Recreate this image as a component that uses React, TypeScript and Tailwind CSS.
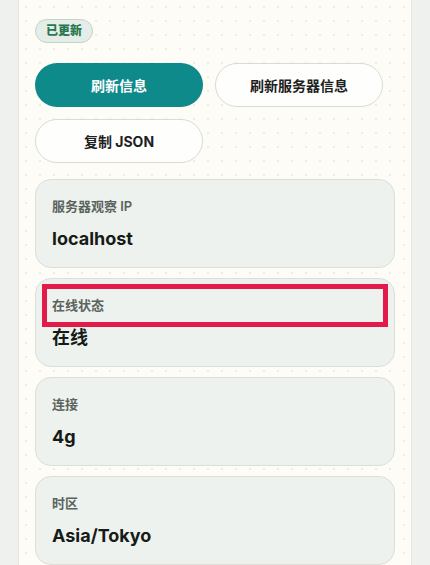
const FONT = 'font-["Inter","Noto_Sans_CJK_SC",sans-serif]';

const items = [
  { label: '服务器观察 IP', value: 'localhost' },
  { label: '在线状态', value: '在线', highlight: true },
  { label: '连接', value: '4g' },
  { label: '时区', value: 'Asia/Tokyo' },
];

function InfoCard({ label, value, highlight }: { label: string; value: string; highlight?: boolean }) {
  return (
    <div className="relative h-[89px] rounded-2xl border border-[#dcdfd7] bg-[#eef2ef] px-4 pt-4">
      <div className="text-[13px] font-semibold leading-5 text-[#5a635d]">{label}</div>
      <div className="mt-[10px] text-[18px] font-bold leading-[26px] text-[#161b18]">{value}</div>
      {/* annotation box */}
      {highlight && (
        <div className="pointer-events-none absolute left-[6px] right-[6px] top-[5px] h-[43px] border-[5px] border-[#e31b4b]" />
      )}
    </div>
  );
}

export default function App() {
  return (
    <div
      className={`${FONT} min-h-screen bg-[#eef1ee] bg-[radial-gradient(#e2e6e2_0.7px,transparent_0.7px)] bg-[size:4px_4px]`}
    >
      <div className="ml-[18px] min-h-screen w-[394px] border-x border-[#e4e6df] bg-[#fdfcf7] bg-[radial-gradient(#eeede4_1px,transparent_1px)] bg-[size:14px_14px] px-4 pt-[17px] pb-6">
        <span className="inline-flex h-6 items-center rounded-full border border-[#c3d5ca] bg-[#e4ede7] px-[10px] text-[12px] font-extrabold text-[#2a7750]">
          已更新
        </span>

        <div className="mt-[20px] flex w-[348px] flex-wrap gap-3">
          <button className="h-[44px] w-[168px] rounded-full bg-[#0f8a8a] text-[14px] font-bold text-white">
            刷新信息
          </button>
          <button className="h-[44px] w-[168px] rounded-full border border-[#d9dbd4] bg-[#fefefc] text-[14px] font-bold text-[#1d211f]">
            刷新服务器信息
          </button>
          <button className="h-[44px] w-[168px] rounded-full border border-[#d9dbd4] bg-[#fefefc] text-[14px] font-bold text-[#1d211f]">
            复制 JSON
          </button>
        </div>

        <div className="mt-4 flex flex-col gap-[10px]">
          {items.map((it) => (
            <InfoCard key={it.label} {...it} />
          ))}
        </div>
      </div>
    </div>
  );
}
